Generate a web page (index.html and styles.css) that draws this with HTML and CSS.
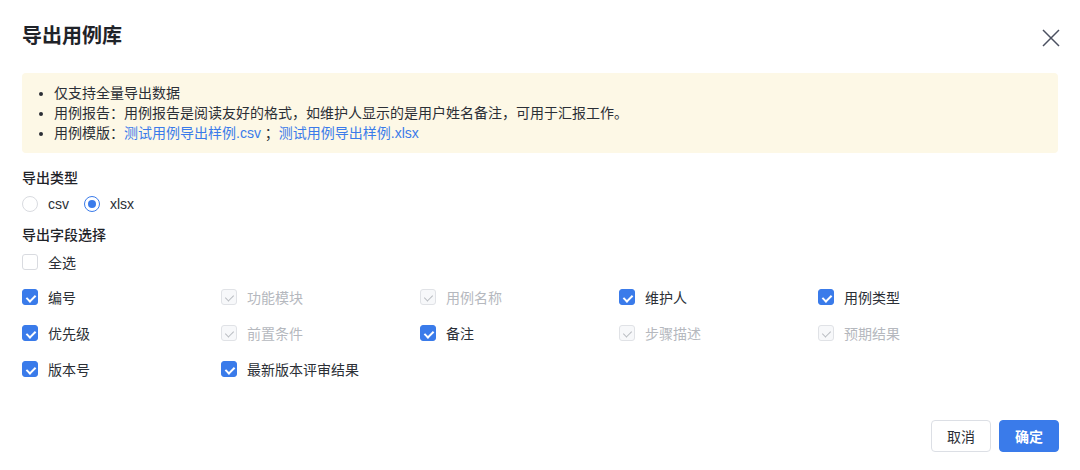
FILE: index.html
```html
<!DOCTYPE html>
<html lang="zh-CN">
<head>
<meta charset="utf-8">
<link rel="stylesheet" href="styles.css">
</head>
<body>
<div class="dialog">
  <div class="header">
    <div class="title">导出用例库</div>
    <svg class="close" width="18" height="18" viewBox="0 0 18 18"><path d="M1 1L17 17M17 1L1 17" stroke="#4b5060" stroke-width="1.5" fill="none"/></svg>
  </div>
  <div class="notice">
    <ul>
      <li>仅支持全量导出数据</li>
      <li>用例报告：用例报告是阅读友好的格式，如维护人显示的是用户姓名备注，可用于汇报工作。</li>
      <li>用例模版：<a class="link">测试用例导出样例.csv</a> ；<a class="link">测试用例导出样例.xlsx</a></li>
    </ul>
  </div>
  <div class="label first">导出类型</div>
  <div class="radios">
    <span class="radio"><span class="rdot"></span>csv</span>
    <span class="radio on"><span class="rdot"></span>xlsx</span>
  </div>
  <div class="label second">导出字段选择</div>
  <div class="opt selall"><span class="cb"></span>全选</div>
  <div class="grid">
    <div class="opt"><span class="cb on"></span>编号</div>
    <div class="opt dis"><span class="cb"></span>功能模块</div>
    <div class="opt dis"><span class="cb"></span>用例名称</div>
    <div class="opt"><span class="cb on"></span>维护人</div>
    <div class="opt"><span class="cb on"></span>用例类型</div>
    <div class="opt"><span class="cb on"></span>优先级</div>
    <div class="opt dis"><span class="cb"></span>前置条件</div>
    <div class="opt"><span class="cb on"></span>备注</div>
    <div class="opt dis"><span class="cb"></span>步骤描述</div>
    <div class="opt dis"><span class="cb"></span>预期结果</div>
    <div class="opt"><span class="cb on"></span>版本号</div>
    <div class="opt"><span class="cb on"></span>最新版本评审结果</div>
  </div>
  <div class="footer">
    <button class="btn">取消</button>
    <button class="btn primary">确定</button>
  </div>
</div>
</body>
</html>
```

FILE: styles.css
```css
* { box-sizing: border-box; }
body {
  margin: 0;
  background: #fff;
  font-family: "Liberation Sans", "Noto Sans CJK SC", sans-serif;
  color: #2b2f36;
  font-size: 14px;
  text-spacing-trim: space-all;
}
.dialog {
  width: 1080px;
  height: 470px;
  padding: 0 20px 0 22px;
}
.header {
  height: 73px;
  display: flex;
  align-items: center;
  justify-content: space-between;
  padding-bottom: 1px;
}
.title {
  font-size: 20px;
  font-weight: 700;
  color: #1f2329;
  line-height: 24px;
}
.close { margin-top: 3px; }
.notice {
  background: #fdf8e6;
  border-radius: 4px;
  padding: 10px 0;
  height: 80px;
  margin-right: 2px;
}
.notice ul {
  margin: 0;
  padding-left: 32px;
  list-style: disc;
}
.notice li {
  line-height: 20px;
  font-size: 14px;
  color: #2b2f36;
}
.link { color: #3a7bea; }
.label {
  font-weight: 500;
  line-height: 22px;
  color: #1f2329;
}
.label.first { margin-top: 14px; }
.radios {
  margin-top: 4px;
  display: flex;
  height: 22px;
  align-items: center;
}
.radio {
  display: inline-flex;
  align-items: center;
  margin-right: 16px;
}
.radio:first-child { margin-right: 15px; }
.rdot {
  width: 16px;
  height: 16px;
  border: 1px solid #d9dbe0;
  border-radius: 50%;
  margin-right: 10px;
  position: relative;
  background: #fff;
}
.radio.on .rdot { border-color: #3a7bea; }
.radio.on .rdot::after {
  content: "";
  position: absolute;
  left: 3px;
  top: 3px;
  width: 8px;
  height: 8px;
  border-radius: 50%;
  background: #3a7bea;
}
.label.second { margin-top: 9px; }
.opt {
  display: flex;
  align-items: center;
  height: 22px;
  color: #2b2f36;
}
.selall { margin-top: 5px; }
.cb {
  width: 16px;
  height: 16px;
  border: 1px solid #d9dbe0;
  border-radius: 3px;
  margin-right: 10px;
  position: relative;
  background: #fff;
  flex: none;
}
.cb.on {
  background: #3a7bea;
  border-color: #3a7bea;
}
.cb.on::after, .dis .cb::after {
  content: "";
  position: absolute;
  left: 4.5px;
  top: 2.5px;
  width: 4px;
  height: 7px;
  border-right: 2px solid #fff;
  border-bottom: 2px solid #fff;
  transform: rotate(45deg);
}
.dis { color: #b5b8be; }
.dis .cb { background: #f7f8fa; border-color: #e0e2e6; }
.dis .cb::after { border-color: #b8bbc0; border-width: 1.5px; }
.grid {
  margin-top: 13px;
  display: grid;
  grid-template-columns: repeat(5, 199px);
  row-gap: 14px;
}
.footer {
  margin-top: 40px;
  display: flex;
  justify-content: flex-end;
  gap: 8px;
  padding-right: 1px;
}
.btn {
  width: 60px;
  height: 32px;
  border-radius: 4px;
  border: 1px solid #dcdfe5;
  background: #fff;
  font-family: "Noto Sans CJK SC", sans-serif;
  font-size: 14px;
  color: #2b2f36;
  padding: 0;
}
.btn.primary {
  background: #3a7bea;
  border-color: #3a7bea;
  color: #fff;
  font-weight: 700;
}
```
